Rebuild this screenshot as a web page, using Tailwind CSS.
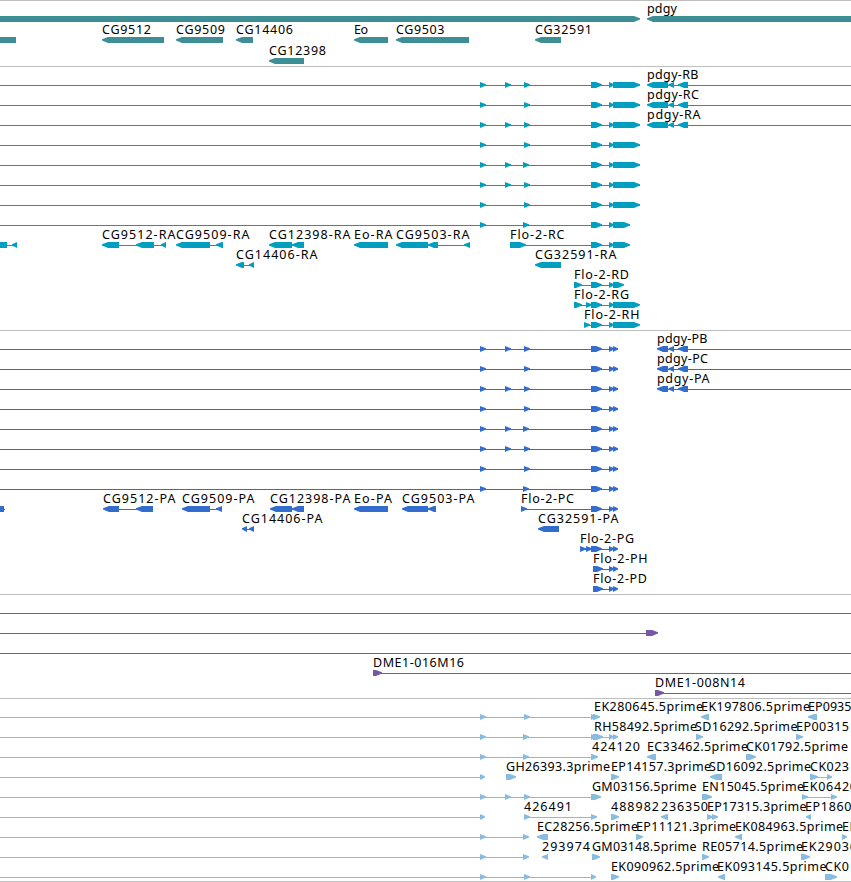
<!DOCTYPE html>
<html lang="en">
<head>
<meta charset="utf-8">
<title>Genome tracks</title>
<script src="https://cdn.jsdelivr.net/npm/@tailwindcss/browser@4"></script>
</head>
<body class="bg-white overflow-hidden">
<main class="flex flex-col w-[851px] h-[882px] overflow-hidden font-['Noto_Sans','DejaVu_Sans',sans-serif] text-[12.5px] text-black border-b border-[#bebebe]">
  <section class="h-[66px] border-t border-[#bebebe] text-[#3e8f95]"><svg id="genes" class="block w-full h-full overflow-visible"></svg></section>
  <section class="h-[264px] border-t border-[#bebebe] text-[#009fbf]"><svg id="transcripts" class="block w-full h-full overflow-visible"></svg></section>
  <section class="h-[264px] border-t border-[#bebebe] text-[#326dce]"><svg id="proteins" class="block w-full h-full overflow-visible"></svg></section>
  <section class="h-[104px] border-t border-[#bebebe] text-[#7458a6]"><svg id="clones" class="block w-full h-full overflow-visible"></svg></section>
  <section class="h-[183px] border-t border-[#bebebe] text-[#87bcde]"><svg id="ests" class="block w-full h-full overflow-visible"></svg></section>
</main>
<script>
// Each group: [label, labelX, features, lineStart, lineEnd]; a feature is "start>end" or "start<end".
const NS = 'http://www.w3.org/2000/svg';
// Right edge of each label.
const ENDS = {
  'pdgy': 677, 'CG9512': 151, 'CG9509': 225, 'CG14406': 293, 'Eo': 368, 'CG9503': 444.5, 'CG32591': 592, 'CG12398': 326,
  'pdgy-RB': 698.5, 'pdgy-RC': 699, 'pdgy-RA': 700.5, 'CG9512-RA': 175.5, 'CG9509-RA': 249.5, 'CG12398-RA': 350.5,
  'Eo-RA': 392.5, 'CG9503-RA': 469.5, 'Flo-2-RC': 564.5, 'CG14406-RA': 317.5, 'CG32591-RA': 616.5,
  'Flo-2-RD': 629, 'Flo-2-RG': 629, 'Flo-2-RH': 639.5,
  'pdgy-PB': 707.5, 'pdgy-PC': 708, 'pdgy-PA': 709.5, 'CG9512-PA': 175.5, 'CG9509-PA': 254.5, 'CG12398-PA': 350.5,
  'Eo-PA': 392, 'CG9503-PA': 474.5, 'Flo-2-PC': 574, 'CG14406-PA': 322.5, 'CG32591-PA': 618.5,
  'Flo-2-PG': 634, 'Flo-2-PH': 647.5, 'Flo-2-PD': 647,
  'DME1-016M16': 464, 'DME1-008N14': 745,
  'EK280645.5prime': 703, 'EK197806.5prime': 810, 'EP0935': 851.5, 'RH58492.5prime': 697, 'SD16292.5prime': 797.5,
  'EP00315': 849, '424120': 640, 'EC33462.5prime': 748, 'CK01792.5prime': 848, 'GH26393.3prime': 610,
  'EP14157.3prime': 711, 'SD16092.5prime': 811, 'CK023': 849, 'GM03156.5prime': 696.5, 'EN15045.5prime': 804,
  'EK06420': 857, '426491': 572, '488982': 659, '236350': 708, 'EP17315.3prime': 806.5, 'EP1860': 851.5,
  'EC28256.5prime': 638, 'EP11121.3prime': 736, 'EK084963.5prime': 843, 'EP': 857, '293974': 590,
  'GM03148.5prime': 696.5, 'RE05714.5prime': 803, 'EK29036': 857, 'EK090962.5prime': 719, 'EK093145.5prime': 826.5, 'CK0': 849
};
function add(svg, tag, attrs, text) {
  const el = document.createElementNS(NS, tag);
  for (const k in attrs) el.setAttribute(k, attrs[k]);
  if (text) el.textContent = text;
  svg.appendChild(el);
}
function feature(svg, spec, y) {
  const m = spec.match(/^(-?[\d.]+)([<>=])([\d.]+)$/), a = +m[1], b = +m[3];
  const t = Math.min(6, b - a);
  let p;
  if (m[2] === '>') p = [[a, 0], [b - t, 0], [b, 2.3], [b, 3.4], [b - t, 6], [a, 6]];
  else if (m[2] === '<') p = [[b, 0], [a + t, 0], [a, 2.3], [a, 3.4], [a + t, 6], [b, 6]];
  else p = [[a, 0], [b, 0], [b, 6], [a, 6]];
  add(svg, 'polygon', { points: p.map(q => q[0] + ',' + (q[1] + y)).join(' '), fill: 'currentColor' });
}
function track(id, top, step, rows) {
  const svg = document.getElementById(id);
  rows.forEach((groups, k) => {
    const y = top + step * k;
    groups.forEach(([label, x, feats, l0, l1]) => {
      if (l1) add(svg, 'rect', { x: l0, y: y + 3, width: l1 - l0, height: 1, fill: 'currentColor' });
      if (feats) feats.split(' ').forEach(f => feature(svg, f, y));
      if (label) add(svg, 'text', { x, y: y - 3, fill: '#000', textLength: ENDS[label] - x }, label);
    });
  });
}

track('genes', 15, 21, [
  [['', 0, '-5>640'], ['pdgy', 647, '647<870']],
  [['', 0, '-5=16'], ['CG9512', 102, '102<164'], ['CG9509', 176, '176<223'], ['CG14406', 236, '236<253'],
   ['Eo', 354, '354<388'], ['CG9503', 396, '396<469'], ['CG32591', 535, '535<561']],
  [['CG12398', 269, '269<304']]
]);

const flo = (mid, end) => ['', 0, '480>486 ' + mid + ' 591>602 609>614 613>' + end, 0, end];
const pr = (l) => ['pdgy-' + l, 647, '647<668 668.5<674 678<688', 648, 851];
track('transcripts', 15, 20, [
  [flo('505>511 524>530', 640), pr('RB')],
  [flo('524>530', 640), pr('RC')],
  [flo('505>511 524>530', 640), pr('RA')],
  [flo('524>530', 640)],
  [flo('505>511 523>529', 640)],
  [flo('505>511 524>530', 640)],
  [flo('524>530', 640)],
  [flo('523>529', 630)],
  [['', 0, '-5=7 12<17', 0, 17], ['CG9512-RA', 102, '102<119 136<154 161<166', 103, 166],
   ['CG9509-RA', 176, '176<210 216<223', 177, 223], ['CG12398-RA', 269, '269<292 292<304', 270, 304],
   ['Eo-RA', 354, '354<388'], ['CG9503-RA', 396, '396<428 428<438 464<470', 397, 470],
   ['Flo-2-RC', 510, '510>526 591>602 609>614 613>630', 510, 629]],
  [['CG14406-RA', 236, '236<244 249<254', 237, 254], ['CG32591-RA', 535, '535<561']],
  [['Flo-2-RD', 574, '574>582 591>602 609>614 613>624', 574, 623]],
  [['Flo-2-RG', 574, '574>582 586>592 591>602 609>614 613>640', 574, 639]],
  [['Flo-2-RH', 584, '584>590 591>602 609>614 613>640', 584, 639]]
]);

const pp = (l) => ['pdgy-' + l, 657, '657<668 668.5<674 678<688', 658, 851];
track('proteins', 15, 20, [
  [flo('505>511 524>530', 618), pp('PB')],
  [flo('524>530', 618), pp('PC')],
  [flo('505>511 524>530', 618), pp('PA')],
  [flo('524>530', 618)],
  [flo('505>511 523>529', 618)],
  [flo('505>511 524>530', 618)],
  [flo('524>530', 618)],
  [flo('523>529', 618)],
  [['', 0, '-2=4', 0, 5], ['CG9512-PA', 103, '103<119 136<153', 104, 153],
   ['CG9509-PA', 182, '182<210 216<222', 183, 222], ['CG12398-PA', 270, '270<292 292<304', 271, 304],
   ['Eo-PA', 354, '354<388'], ['CG9503-PA', 402, '402<428 428<436', 403, 436],
   ['Flo-2-PC', 521, '521>527 591>602 609>614 613>618', 521, 617]],
  [['CG14406-PA', 242, '242<247 249<254', 243, 254], ['CG32591-PA', 538, '538<559']],
  [['Flo-2-PG', 580, '580>586 586>592 591>602 609>614 613>618', 580, 617]],
  [['Flo-2-PH', 593, '593>603 609>614 613>618', 593, 617]],
  [['Flo-2-PD', 593, '593>603 609>614 613>618', 593, 617]]
]);

track('clones', 15, 20, [
  [['', 0, '', 0, 851]],
  [['', 0, '646>658', 0, 656]],
  [['', 0, '', 0, 851]],
  [['DME1-016M16', 373, '373>382', 373, 851]],
  [['DME1-008N14', 655, '655>664', 655, 851]]
]);

track('ests', 15, 20, [
  [['EK280645.5prime', 594, '480>486 524>530 591>596 593>600', 0, 597], ['EK197806.5prime', 701, '701<709'], ['EP0935', 808, '808<817']],
  [['RH58492.5prime', 594, '480>486 523>529 591>596 593>603 609>614 613>618', 0, 617], ['SD16292.5prime', 695, '696>703'], ['EP00315', 796, '796>803']],
  [['424120', 592, '480>486 523>529 591>598', 0, 597], ['EC33462.5prime', 647, '647<656'], ['CK01792.5prime', 746, '746>756']],
  [['', 0, '480>485', 0, 484], ['GH26393.3prime', 506, '506>516'], ['EP14157.3prime', 611, '611>619'],
   ['SD16092.5prime', 709, '710<722'], ['CK023', 810, '810>818 827>832', 810, 831]],
  [['GM03156.5prime', 592, '480>486 505>511 524>530 591>601', 0, 600], ['EN15045.5prime', 702, '702>712'], ['EK06420', 802, '802>808 831>837', 802, 836]],
  [['', 0, '480>485', 0, 484], ['426491', 524, '524>530 591>597', 524, 596], ['488982', 611, '611>619'], ['236350', 661, '661<668'],
   ['EP17315.3prime', 707, '707>713 712>718', 707, 717], ['EP1860', 805, '806<811']],
  [['', 0, '480>486 523>529', 0, 528], ['EC28256.5prime', 537, '537<548'], ['EP11121.3prime', 636, '636>643'],
   ['EK084963.5prime', 735, '735<742'], ['EP', 842, '842>847']],
  [['', 0, '480>486 523>529', 0, 528], ['293974', 542, '542<548'], ['GM03148.5prime', 592, '592>600'], ['RE05714.5prime', 702, '702>709'], ['EK29036', 801, '801>810']],
  [['', 0, '480>486 524>530 591>596', 0, 595], ['EK090962.5prime', 611, '611>619'], ['EK093145.5prime', 717, '718<725'], ['CK0', 825, '825>837']]
]);
</script>
</body>
</html>
